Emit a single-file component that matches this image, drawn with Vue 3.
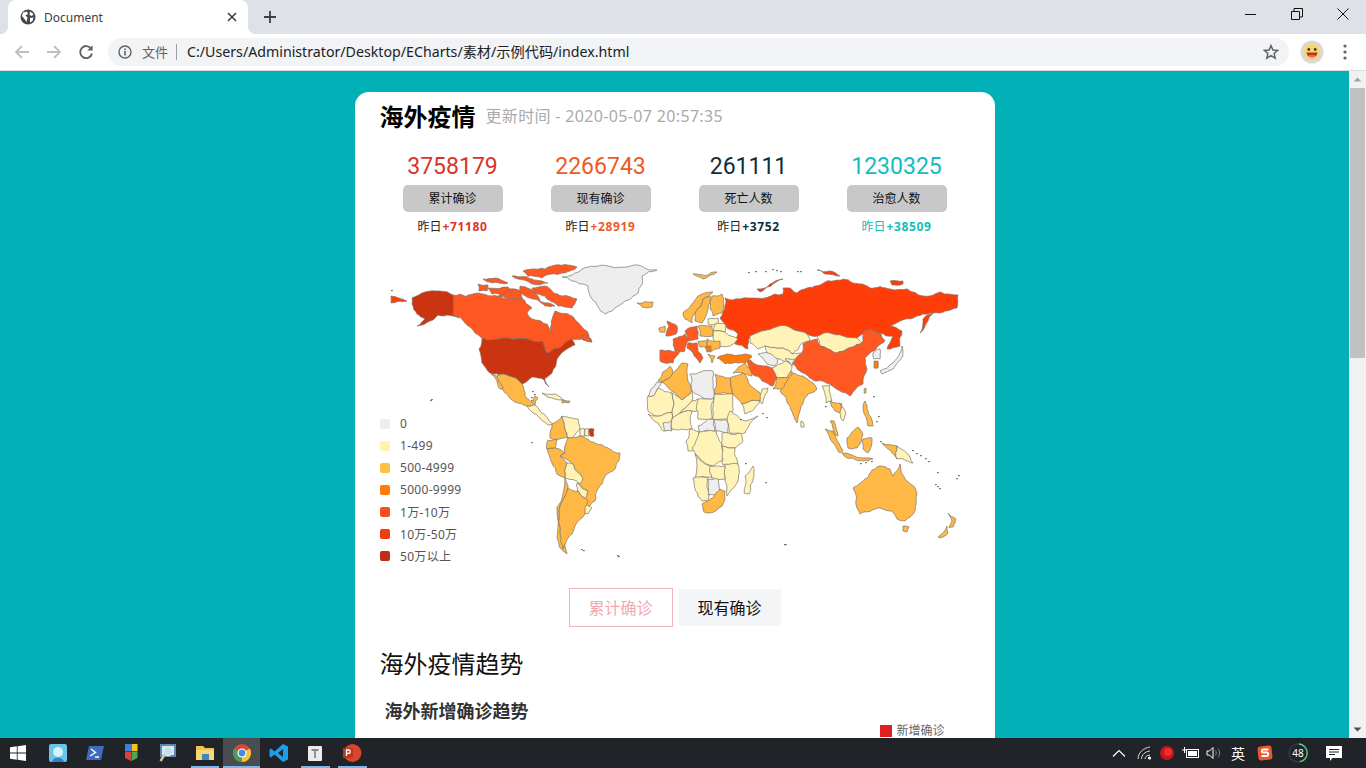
<script setup>
// 图例与配色
const colors = {
  none: '#eeeeee',
  low: '#fff3b8',
  mid: '#ffb845',
  high: '#ff7a0a',
  wan: '#ff5722',
  big: '#ff3d08',
  top: '#cb3410'
}

const legend = [
  { label: '0', color: '#eeeeee' },
  { label: '1-499', color: '#fff3b0' },
  { label: '500-4999', color: '#ffbf47' },
  { label: '5000-9999', color: '#ff7a0a' },
  { label: '1万-10万', color: '#f4511e' },
  { label: '10万-50万', color: '#f43c0a' },
  { label: '50万以上', color: '#bf2e12' }
]

const stats = [
  { value: 3758179, label: '累计确诊', add: 71180, color: '#d8352a' },
  { value: 2266743, label: '现有确诊', add: 28919, color: '#ee5a1f' },
  { value: 261111, label: '死亡人数', add: 3752, color: '#0c2f3a' },
  { value: 1230325, label: '治愈人数', add: 38509, color: '#14bdbd', tint: true }
]

// 国家轮廓，坐标与 viewBox 一致
const outlines = [
  ['none', '562,276 582,268 608,265 638,264 657,269 642,275 638,292 618,305 605,313 592,298 588,285 572,280'],
  ['mid', '637,302 653,301 652,306 642,306'],
  ['big', '391,295 407,300 391,302'],
  ['top', '412,297 425,291 440,290 453,294 453,313 459,317 447,314 438,314 430,320 417,325 425,318 417,313 412,303'],
  ['wan', '453,294 478,292 492,295 508,298 522,297 532,307 527,312 532,318 547,323 550,332 555,310 572,315 587,330 592,341 582,338 572,338 562,345 547,352 543,340 528,338 508,337 482,337 475,332 465,322 453,313'],
  ['wan', '532,287 545,285 562,295 577,298 572,307 558,305 545,295 535,292'],
  ['wan', '488,287 508,286 515,294 492,293'],
  ['wan', '478,283 488,284 487,290 479,290'],
  ['wan', '523,270 552,265 577,266 562,272 542,277 528,275'],
  ['wan', '483,278 495,277 508,282 492,282'],
  ['wan', '512,275 532,278 548,282 532,283 518,278'],
  ['wan', '498,295 510,288 520,290 522,297 508,298'],
  ['wan', '520,285 530,288 540,300 555,305 545,305 530,297 520,292'],
  ['wan', '582,335 587,332 592,341 583,339'],
  ['top', '482,337 508,337 528,338 543,340 547,352 562,345 572,338 575,344 567,348 557,358 552,372 545,377 549,386 543,378 532,376 522,383 515,377 503,373 490,372 482,362 479,348'],
  ['mid', '497,374 503,373 515,377 522,383 525,395 533,402 535,395 538,397 535,404 527,405 518,402 505,392 497,380'],
  ['mid', '491,373 495,374 503,388 500,388'],
  ['low', '527,405 535,404 540,410 548,418 553,423 548,424 540,417 532,411'],
  ['low', '542,392 555,393 568,401 555,398'],
  ['mid', '562,399 570,400 569,402 562,402'],
  ['mid', '562,415 552,423 550,437 557,439 568,437 565,428'],
  ['low', '562,415 578,418 580,428 572,437 568,437 565,428'],
  ['low', '580,428 585,428 585,435 580,435'],
  ['low', '585,428 589,428 589,435 585,435'],
  ['top', '589,428 594,428 594,435 590,435'],
  ['mid', '548,439 557,438 555,447 547,448'],
  ['mid', '547,448 555,447 565,452 560,455 567,462 565,477 557,473 552,462'],
  ['mid', '568,437 580,435 595,442 608,447 620,452 615,468 598,488 595,500 588,507 583,500 588,490 578,482 583,477 573,463 560,455 565,452'],
  ['low', '567,462 573,463 583,477 580,483 565,477'],
  ['low', '577,482 588,490 585,498 578,490'],
  ['low', '585,503 592,507 588,513 582,510'],
  ['mid', '565,477 568,487 560,533 567,553 560,547 557,537'],
  ['mid', '568,487 578,490 588,500 585,513 575,525 572,533 563,548 560,533'],
  ['big', '720,317 725,297 740,298 750,297 783,293 783,287 790,287 797,292 807,287 827,280 843,278 853,282 870,287 890,288 923,295 958,294 957,307 933,312 923,313 917,315 900,320 890,325 902,330 900,345 887,348 893,335 880,332 870,328 857,337 843,335 817,335 807,333 787,325 773,327 750,335 748,348 735,343 738,333 727,327'],
  ['big', '757,288 783,278 770,283 760,291'],
  ['big', '920,332 923,318 933,312 928,320'],
  ['big', '817,269 830,270 840,275 825,273'],
  ['big', '890,280 903,280 903,283 892,284'],
  ['mid', '693,273 717,271 703,278'],
  ['low', '750,335 773,327 787,325 807,333 810,340 802,342 792,353 783,347 765,345 758,348 750,342'],
  ['low', '817,335 830,332 843,335 857,337 862,342 847,348 837,352 820,345'],
  ['wan', '810,340 817,338 820,345 837,352 847,348 862,342 863,330 870,328 880,332 885,340 870,352 865,357 867,368 863,383 850,395 840,390 830,383 817,380 803,372 793,363 802,352 803,343'],
  ['low', '765,345 783,347 792,353 802,352 793,363 780,358 767,357'],
  ['none', '758,353 768,352 778,358 775,365 767,363'],
  ['none', '785,358 795,358 792,365'],
  ['low', '772,367 785,360 792,365 787,377 777,377'],
  ['wan', '747,358 755,363 767,365 772,367 777,377 773,385 762,380 752,373'],
  ['mid', '777,377 787,377 792,370 790,380 783,388 773,388'],
  ['mid', '793,372 803,375 813,382 817,388 808,393 800,410 797,422 790,405 785,395 780,390 787,380'],
  ['low', '801,420 803,421 804,426 801,426'],
  ['low', '822,385 830,384 832,400 826,402'],
  ['mid', '830,400 840,402 841,412 835,410'],
  ['low', '841,402 846,412 843,420 840,412'],
  ['mid', '830,420 834,420 838,435 834,433'],
  ['mid', '825,428 833,430 843,450 840,452 830,438'],
  ['mid', '842,452 873,458 863,460 847,457'],
  ['mid', '847,437 858,426 863,433 857,447 848,447'],
  ['mid', '863,438 872,437 868,452 863,448'],
  ['mid', '865,400 868,410 873,425 868,425 863,407'],
  ['mid', '882,442 897,445 897,458 888,448'],
  ['low', '897,445 913,462 903,458 897,458'],
  ['mid', '853,487 867,477 872,469 880,465 890,468 893,475 900,463 905,478 917,493 915,510 905,520 897,518 892,510 880,507 860,513 857,507'],
  ['mid', '903,525 909,526 907,531 903,530'],
  ['mid', '948,512 956,518 953,526 949,527 952,520'],
  ['mid', '938,536 947,525 948,532 940,537'],
  ['low', '745,475 753,465 754,475 749,493 744,492'],
  ['mid', '658,380 670,365 673,372 662,381'],
  ['mid', '662,381 673,372 682,362 688,363 692,390 682,399'],
  ['none', '648,395 657,381 662,381 658,387 653,395'],
  ['low', '648,395 653,395 658,387 672,392 672,412 655,415 648,410'],
  ['low', '672,392 682,399 692,390 692,400 680,412 672,418 672,412'],
  ['low', '648,413 655,415 672,412 672,418 672,428 663,430 658,422'],
  ['none', '663,422 672,420 672,430 665,430'],
  ['low', '672,418 680,412 692,410 692,428 682,428 672,428'],
  ['low', '692,400 698,398 698,410 692,410 680,412'],
  ['none', '690,373 713,370 714,397 705,398 692,390'],
  ['mid', '715,373 730,377 733,393 715,393'],
  ['low', '698,398 705,398 714,397 712,418 698,418'],
  ['low', '714,393 733,393 733,410 727,418 712,418'],
  ['low', '730,410 745,420 752,418 758,415 745,432 730,432 727,420'],
  ['none', '698,425 708,418 714,418 715,430 699,431'],
  ['none', '714,419 727,419 728,432 716,430'],
  ['low', '690,428 699,431 700,445 688,450 686,440'],
  ['low', '699,431 716,430 722,443 722,460 712,465 695,452 692,447'],
  ['low', '722,432 740,432 743,440 735,447 722,445'],
  ['low', '722,445 735,447 738,463 722,463'],
  ['low', '695,453 712,465 712,477 695,477'],
  ['low', '693,477 708,477 708,500 702,500'],
  ['none', '708,478 718,477 720,493 708,494'],
  ['low', '710,465 725,465 725,478 712,477'],
  ['low', '725,463 738,463 735,485 727,495 725,480'],
  ['mid', '702,503 720,488 725,490 722,505 710,512 704,511'],
  ['mid', '730,377 743,372 762,395 760,400 742,403 733,393'],
  ['mid', '733,372 745,362 752,375 743,372'],
  ['high', '717,357 727,353 745,353 752,355 745,362 725,363'],
  ['low', '762,388 768,387 762,403 760,400'],
  ['low', '742,403 760,400 752,410 745,413'],
  ['mid', '683,312 698,295 713,291 703,298 695,312 692,322 685,318'],
  ['mid', '695,312 703,298 710,295 708,308 702,322 695,320'],
  ['mid', '712,295 722,293 722,312 713,315 710,307'],
  ['low', '708,318 718,317 718,323 708,323'],
  ['low', '715,323 725,323 725,331 713,330'],
  ['mid', '698,325 712,325 713,335 700,335'],
  ['wan', '685,330 697,325 698,338 688,340'],
  ['low', '713,330 725,331 738,338 730,345 715,343'],
  ['wan', '673,338 685,333 688,340 685,350 675,350'],
  ['wan', '667,320 677,325 676,333 666,335 669,325'],
  ['mid', '659,327 665,325 665,331 660,331'],
  ['wan', '660,349 680,350 673,362 665,362 660,360'],
  ['wan', '688,342 697,342 698,350 703,357 700,362 693,352 687,347'],
  ['mid', '698,340 707,340 707,347 700,346'],
  ['mid', '707,338 720,340 720,347 712,350 707,347'],
  ['high', '706,345 711,345 711,351 707,351'],
  ['mid', '708,353 715,355 712,362'],
  ['none', '880,370 893,362 900,352 902,345 903,355 893,368 882,373'],
  ['none', '873,352 880,348 880,358 874,358'],
  ['high', '874,360 878,360 878,367 874,367'],
  ['mid', '864,388 866,387 866,392 864,392']
]

// 把长边细分并轻微抖动，相邻国家共用的边保持一致
function roughen(a, b, depth) {
  const len = Math.hypot(b[0] - a[0], b[1] - a[1])
  if (depth === 0 || len < 4) return []
  const [p, q] = a[0] < b[0] || (a[0] === b[0] && a[1] < b[1]) ? [a, b] : [b, a]
  const seed = Math.sin(p[0] * 12.9898 + p[1] * 78.233 + q[0] * 37.719 + q[1] * 11.135) * 43758.5453
  const offset = (seed - Math.floor(seed) - 0.5) * len * 0.22
  const mid = [
    (a[0] + b[0]) / 2 + ((q[1] - p[1]) / len) * offset,
    (a[1] + b[1]) / 2 - ((q[0] - p[0]) / len) * offset
  ]
  return [...roughen(a, mid, depth - 1), mid, ...roughen(mid, b, depth - 1)]
}

const countries = outlines.map(([key, points]) => {
  const pts = points.split(' ').map(s => s.split(',').map(Number))
  const out = []
  pts.forEach((pt, i) => {
    out.push(pt, ...roughen(pt, pts[(i + 1) % pts.length], 3))
  })
  return { fill: colors[key], points: out.map(p => p[0].toFixed(1) + ',' + p[1].toFixed(1)).join(' ') }
})

// 零散小岛
const islands = [
  [391, 289], [430, 399], [431, 398], [531, 399], [531, 396], [532, 390], [534, 393],
  [531, 441], [581, 548], [583, 549], [617, 554], [618, 555], [784, 543], [785, 543],
  [765, 481], [958, 474], [956, 477], [935, 483], [937, 485], [939, 487], [937, 471],
  [916, 452], [920, 454], [925, 457], [928, 460], [912, 449], [878, 415], [876, 420],
  [880, 440], [860, 462], [865, 461], [871, 460], [748, 271], [755, 270], [765, 270],
  [772, 268], [776, 269], [780, 270], [797, 270], [800, 270], [873, 395], [825, 405],
  [762, 412], [766, 416], [745, 462], [740, 418]
]

const taskIcons = ['cloud', 'shell', 'tiles', 'search', 'folder', 'chrome', 'code', 'text', 'slides']
const openApps = ['folder', 'chrome', 'text', 'slides']
</script>

<template>
  <div class="desktop">
    <!-- 标签栏 -->
    <header class="tabbar">
      <div class="tab">
        <svg class="globe" width="16" height="16" viewBox="0 0 16 16">
          <circle cx="8" cy="8" r="7.5" fill="#45494d" />
          <path d="M3 3.5 7 2.5 8 5 5.5 6.5 7.5 8.5 6.5 13 4.5 10 2 7ZM10 2.5 13.5 5 12 7 9.5 6ZM10 9 13.5 8.5 12.5 12 10 13.5Z" fill="#fff" />
        </svg>
        <span class="tab-title">Document</span>
        <svg class="tab-close" width="10" height="10" viewBox="0 0 10 10">
          <path d="M1 1 9 9M9 1 1 9" stroke="#3c4043" stroke-width="1.6" />
        </svg>
      </div>
      <svg class="new-tab" width="12" height="12" viewBox="0 0 12 12">
        <path d="M6 0V12M0 6H12" stroke="#3c4043" stroke-width="1.8" />
      </svg>
      <div class="win-btns">
        <svg width="12" height="12" viewBox="0 0 12 12"><path d="M0 6.5H11" stroke="#111" /></svg>
        <svg width="12" height="12" viewBox="0 0 12 12">
          <path d="M.5 3.5H8.5V11.5H.5ZM3 3.5V.5H11.5V9H8.5" fill="none" stroke="#111" />
        </svg>
        <svg width="12" height="12" viewBox="0 0 12 12"><path d="M.5.5 11.5 11.5M11.5.5.5 11.5" stroke="#111" /></svg>
      </div>
    </header>

    <!-- 地址栏 -->
    <nav class="toolbar">
      <svg class="nav-ico" width="16" height="16" viewBox="0 0 16 16">
        <path d="M15 8H2M8 2 2 8 8 14" fill="none" stroke="#bcbfc3" stroke-width="1.8" />
      </svg>
      <svg class="nav-ico" width="16" height="16" viewBox="0 0 16 16">
        <path d="M1 8H14M8 2 14 8 8 14" fill="none" stroke="#bcbfc3" stroke-width="1.8" />
      </svg>
      <svg class="nav-ico" width="16" height="16" viewBox="0 0 16 16">
        <path d="M13.2 4.8A6 6 0 1 0 14 9.5" fill="none" stroke="#5f6368" stroke-width="1.9" />
        <path d="M14.6 1.2V6.6H9.2Z" fill="#5f6368" />
      </svg>
      <div class="omnibox">
        <svg width="14" height="14" viewBox="0 0 14 14">
          <circle cx="7" cy="7" r="6" fill="none" stroke="#5f6368" stroke-width="1.4" />
          <path d="M7 6V10.5M7 3.4V5" stroke="#5f6368" stroke-width="1.6" />
        </svg>
        <span class="scheme">文件</span>
        <span class="url">C:/Users/Administrator/Desktop/ECharts/素材/示例代码/index.html</span>
        <svg class="star" width="16" height="16" viewBox="0 0 16 16">
          <path d="M8 1.6 9.9 6 14.7 6.4 11.1 9.5 12.2 14.2 8 11.7 3.8 14.2 4.9 9.5 1.3 6.4 6.1 6Z" fill="none" stroke="#5f6368" stroke-width="1.5" />
        </svg>
      </div>
      <svg class="avatar" width="24" height="24" viewBox="0 0 24 24">
        <circle cx="12" cy="12" r="11.5" fill="#ddd9d2" />
        <circle cx="12" cy="12" r="8" fill="#f8d66b" />
        <circle cx="8.8" cy="9.5" r="1.4" fill="#4a3a20" />
        <circle cx="15.2" cy="9.5" r="1.4" fill="#4a3a20" />
        <path d="M6.5 12.5H17.5C17 16 15 17 12 17S7 16 6.5 12.5Z" fill="#b8302a" />
        <path d="M9 15H15C15 18.5 9 18.5 9 15Z" fill="#f06a5a" />
      </svg>
      <svg class="menu-dots" width="4" height="16" viewBox="0 0 4 16">
        <circle cx="2" cy="2" r="1.6" fill="#5f6368" />
        <circle cx="2" cy="8" r="1.6" fill="#5f6368" />
        <circle cx="2" cy="14" r="1.6" fill="#5f6368" />
      </svg>
    </nav>

    <!-- 页面内容 -->
    <div class="viewport">
      <main class="page">
        <section class="card">
          <div class="head">
            <h1>海外疫情</h1>
            <span class="update">更新时间 - 2020-05-07 20:57:35</span>
          </div>

          <ul class="stats">
            <li v-for="item in stats" :key="item.label" class="stat">
              <div class="stat-num" :style="{ color: item.color }">{{ item.value }}</div>
              <div class="stat-label">{{ item.label }}</div>
              <div class="stat-add" :style="{ color: item.tint ? item.color : '#222' }">
                昨日<b :style="{ color: item.color }">+{{ item.add }}</b>
              </div>
            </li>
          </ul>

          <div class="map">
            <svg class="map-svg" width="600" height="310" viewBox="375 255 600 310">
              <polygon
                v-for="(c, i) in countries"
                :key="i"
                :points="c.points"
                :fill="c.fill"
                stroke="#7d7468"
                stroke-width="0.7"
                stroke-linejoin="round"
              />
              <rect
                v-for="(p, i) in islands"
                :key="'i' + i"
                :x="p[0]"
                :y="p[1]"
                width="1.8"
                height="1.2"
                fill="#77716a"
              />
            </svg>
            <ul class="legend">
              <li v-for="item in legend" :key="item.label">
                <i :style="{ background: item.color }"></i>{{ item.label }}
              </li>
            </ul>
          </div>

          <div class="switch">
            <button class="switch-btn active">累计确诊</button>
            <button class="switch-btn">现有确诊</button>
          </div>

          <h2 class="trend-title">海外疫情趋势</h2>
          <div class="chart-head">
            <h3>海外新增确诊趋势</h3>
            <div class="chart-legend"><i></i>新增确诊</div>
          </div>
          <div class="chart-body"></div>
        </section>
      </main>
      <aside class="scrollbar">
        <svg width="17" height="17" viewBox="0 0 17 17"><path d="M4.5 10.5 8.5 6.5 12.5 10.5Z" fill="#a3a3a3" /></svg>
        <div class="thumb"></div>
        <svg class="arrow-down" width="17" height="17" viewBox="0 0 17 17"><path d="M4.5 6.5 8.5 10.5 12.5 6.5Z" fill="#505050" /></svg>
      </aside>
    </div>

    <!-- 任务栏 -->
    <footer class="taskbar">
      <svg class="start" width="16" height="16" viewBox="0 0 16 16">
        <path d="M0 2.3 6.8 1.3V7.6H0ZM7.6 1.2 16 0V7.6H7.6ZM0 8.4H6.8V14.7L0 13.7ZM7.6 8.4H16V16L7.6 14.8Z" fill="#fff" />
      </svg>
      <div v-for="name in taskIcons" :key="name" class="task" :class="{ on: name === 'chrome', open: openApps.includes(name) }">
        <svg width="20" height="20" viewBox="0 0 20 20">
          <template v-if="name === 'cloud'">
            <rect x="1" y="1" width="18" height="18" rx="2" fill="#6cc4ea" />
            <circle cx="10" cy="9" r="5" fill="#d8f1fb" />
            <path d="M4 19C5 13 15 13 16 19Z" fill="#2b86c5" />
          </template>
          <template v-else-if="name === 'shell'">
            <path d="M4 3H19L16 17H1Z" fill="#3f6cc0" />
            <path d="M6 6 10.5 9.5 5 13M10 14H14" fill="none" stroke="#fff" stroke-width="1.4" />
          </template>
          <template v-else-if="name === 'tiles'">
            <rect x="4" y="1" width="6" height="7" fill="#3d7fdc" />
            <rect x="10.5" y="1" width="6" height="7" fill="#f6c21c" />
            <path d="M4 8.5H10V18L4 15Z" fill="#d8433c" />
            <path d="M10.5 8.5H16.5V15L10.5 18Z" fill="#4aa84f" />
          </template>
          <template v-else-if="name === 'search'">
            <rect x="2" y="1" width="16" height="13" fill="#5d87b5" />
            <rect x="4" y="3" width="12" height="9" fill="#dbe7f1" />
            <circle cx="10" cy="8" r="4.5" fill="#bfe0ee" stroke="#e9e9e9" stroke-width="1.4" />
            <path d="M7 11 2.5 18" stroke="#d8c8a8" stroke-width="2.4" />
          </template>
          <template v-else-if="name === 'folder'">
            <path d="M1 3H8L10 5H19V17H1Z" fill="#f2c14b" />
            <rect x="1" y="7" width="18" height="10" fill="#f9d774" />
            <rect x="7" y="11" width="7" height="6" fill="#3d8ac2" />
          </template>
          <template v-else-if="name === 'chrome'">
            <circle cx="10" cy="10" r="9" fill="#d8483a" />
            <path d="M10 10 17.8 5.5A9 9 0 0 1 10 19Z" fill="#f5c534" />
            <path d="M10 10 10 19A9 9 0 0 1 2.2 5.5Z" fill="#4a9d57" />
            <circle cx="10" cy="10" r="4.6" fill="#fff" />
            <circle cx="10" cy="10" r="3.4" fill="#4a8be0" />
          </template>
          <template v-else-if="name === 'code'">
            <path d="M14 1 19 3.5V16.5L14 19 5.5 11.5 2 14.5 .5 13.5V6.5L2 5.5 5.5 8.5ZM14 6 9 10 14 14Z" fill="#1f9ee8" />
          </template>
          <template v-else-if="name === 'text'">
            <rect x="3" y="3" width="14" height="15" rx="1" fill="#ececec" />
            <path d="M6.5 7H13.5M10 7V15" stroke="#8a8a8a" stroke-width="1.8" />
          </template>
          <template v-else>
            <circle cx="10.5" cy="10" r="9" fill="#d8472b" />
            <rect x="1" y="5" width="10" height="10" rx="1" fill="#b83a1e" />
            <path d="M4.5 13V7H7C8.6 7 8.6 10.4 7 10.4H4.5" fill="none" stroke="#fff" stroke-width="1.3" />
          </template>
        </svg>
      </div>

      <div class="tray">
        <svg width="14" height="8" viewBox="0 0 14 8"><path d="M1 7.5 7 1.5 13 7.5" fill="none" stroke="#fff" stroke-width="1.2" /></svg>
        <svg class="t-wifi" width="16" height="14" viewBox="0 0 16 14">
          <path d="M1 13C1 7 6 2 13 1M4.5 13C4.5 9 8 5.5 13 5M8 13C8 11 10 9 13 9" fill="none" stroke="#d8d8d8" />
          <circle cx="12.5" cy="12" r="1.6" fill="#fff" />
        </svg>
        <svg class="t-rec" width="14" height="14" viewBox="0 0 14 14">
          <circle cx="7" cy="7" r="7" fill="#c4161c" />
          <circle cx="8" cy="6" r="4" fill="#ef2b2b" />
        </svg>
        <svg class="t-bat" width="17" height="12" viewBox="0 0 17 12">
          <rect x="4.5" y="2.5" width="12" height="8" fill="none" stroke="#fff" />
          <rect x="6" y="4" width="9" height="5" fill="#fff" />
          <path d="M0 3H5M2.5 0V6" stroke="#fff" />
        </svg>
        <svg class="t-vol" width="16" height="14" viewBox="0 0 16 14">
          <path d="M1 5H3.5L7 1.5V12.5L3.5 9H1Z" fill="none" stroke="#fff" />
          <path d="M9.5 4.5C10.5 6 10.5 8 9.5 9.5M12 2.5C14 5 14 9 12 11.5" fill="none" stroke="#8c8c8c" />
        </svg>
        <span class="t-lang">英</span>
        <svg class="t-sogou" width="16" height="16" viewBox="0 0 16 16">
          <rect x="1" y="1" width="14" height="14" rx="2.5" fill="#e8592a" transform="rotate(-6 8 8)" />
          <path d="M11.5 4.5H6C4.5 4.5 4.5 7.5 6 7.5H10C11.5 7.5 11.5 11 10 11H4.5" fill="none" stroke="#fff" stroke-width="2" />
        </svg>
        <div class="t-badge">
          <svg width="20" height="20" viewBox="0 0 20 20">
            <circle cx="10" cy="10" r="9" fill="none" stroke="#3a3d40" stroke-width="1.4" />
            <path d="M11 1A9 9 0 0 1 12 18.8" fill="none" stroke="#55c78a" stroke-width="1.4" />
          </svg>
          <span>48</span>
        </div>
        <svg class="t-note" width="16" height="16" viewBox="0 0 16 16">
          <path d="M0 1H16V13H6.5L4 16V13H0Z" fill="#fff" />
          <path d="M3 4.5H13M3 7H13M3 9.5H9" stroke="#202428" />
        </svg>
      </div>
    </footer>
  </div>
</template>

<style>
html,
body {
  margin: 0;
  overflow: hidden;
}
</style>

<style scoped>
.desktop {
  width: 1366px;
  height: 768px;
  display: flex;
  flex-direction: column;
  overflow: hidden;
  font-family: "Noto Sans", "Noto Sans CJK SC", sans-serif;
}

.tabbar {
  height: 34px;
  flex: none;
  display: flex;
  align-items: center;
  background: #dee1e6;
}

.tab {
  position: relative;
  width: 240px;
  height: 34px;
  margin-left: 8px;
  box-sizing: border-box;
  padding: 0 12px;
  display: flex;
  align-items: center;
  background: #fff;
  border-radius: 8px 8px 0 0;
}

.tab::before,
.tab::after {
  content: "";
  position: absolute;
  bottom: 0;
  width: 8px;
  height: 8px;
}

.tab::before {
  left: -8px;
  background: radial-gradient(circle at 0 0, transparent 8px, #fff 8.5px);
}

.tab::after {
  right: -8px;
  background: radial-gradient(circle at 100% 0, transparent 8px, #fff 8.5px);
}

.tab-title {
  margin-left: 8px;
  font-size: 12px;
  color: #3c4043;
}

.tab-close {
  margin-left: auto;
  margin-right: -1px;
}

.new-tab {
  margin-left: 16px;
}

.win-btns {
  margin-left: auto;
  margin-right: 17px;
  margin-top: -6px;
  display: flex;
  gap: 34px;
}

.toolbar {
  height: 37px;
  flex: none;
  box-sizing: border-box;
  border-bottom: 1px solid #d8dade;
  padding-left: 14px;
  display: flex;
  align-items: center;
  background: #fff;
}

.nav-ico {
  margin-right: 16px;
}

.omnibox {
  width: 1181px;
  height: 28px;
  margin-left: -2px;
  box-sizing: border-box;
  padding: 0 10px;
  display: flex;
  align-items: center;
  background: #f1f3f4;
  border-radius: 14px;
}

.scheme {
  margin-left: 10px;
  padding-right: 8px;
  border-right: 1px solid #9aa0a6;
  font-size: 13px;
  line-height: 16px;
  color: #5f6368;
}

.url {
  margin-left: 10px;
  margin-top: -2px;
  font-size: 14.2px;
  color: #202124;
}

.star {
  margin-left: auto;
}

.avatar {
  margin-left: 11px;
}

.menu-dots {
  margin-left: 19px;
}

.viewport {
  flex: 1;
  min-height: 0;
  display: flex;
}

.page {
  flex: 1;
  overflow: hidden;
  background: #00b0b6;
}

.card {
  width: 640px;
  margin: 21px auto 0;
  box-sizing: border-box;
  padding: 0 25px;
  background: #fff;
  border-radius: 14px;
}

.head {
  height: 46px;
  display: flex;
  align-items: center;
}

.head h1 {
  margin: 0;
  font-size: 24px;
  font-weight: 700;
  color: #000;
}

.update {
  margin-left: 10px;
  font-size: 16px;
  letter-spacing: 0.34px;
  color: #aaa;
}

.stats {
  margin: 13px 0 0 -1px;
  padding: 0;
  list-style: none;
  display: grid;
  grid-template-columns: repeat(4, 148px);
}

.stat {
  display: flex;
  flex-direction: column;
  align-items: center;
}

.stat-num {
  height: 34px;
  line-height: 32px;
  font-family: Roboto, sans-serif;
  font-size: 23px;
}

.stat-label {
  width: 100px;
  height: 27px;
  line-height: 27px;
  text-align: center;
  font-size: 12px;
  color: #111;
  background: #c8c8c8;
  border-radius: 5px;
}

.stat-add {
  margin-top: 6px;
  line-height: 18px;
  font-size: 12px;
}

.stat-add b {
  margin-left: 1px;
  font-weight: 700;
  letter-spacing: 0.6px;
}

.map {
  position: relative;
  height: 327px;
  margin: 0 -25px;
}

.map-svg {
  display: block;
  margin: 20px 0 0 20px;
}

.legend {
  position: absolute;
  left: 25px;
  top: 156.5px;
  margin: 0;
  padding: 0;
  list-style: none;
  font-size: 12px;
  letter-spacing: 0.3px;
  color: #555;
}

.legend li {
  height: 22px;
  display: flex;
  align-items: center;
}

.legend i {
  width: 10px;
  height: 10px;
  margin-right: 10.5px;
  border-radius: 2px;
}

.switch {
  display: flex;
  justify-content: center;
  align-items: center;
  gap: 6px;
  margin-top: 5px;
}

.switch-btn {
  width: 102px;
  height: 37px;
  padding: 0 0 2px;
  border: 0;
  font-family: inherit;
  font-size: 16px;
  color: #111;
  background: #f4f5f7;
}

.switch-btn.active {
  width: 104px;
  height: 39px;
  border: 1px solid #f0b5bb;
  color: #f3a8af;
  background: #fff;
}

.trend-title {
  margin: 19px 0 0;
  line-height: 36px;
  font-size: 24px;
  font-weight: 400;
  color: #111;
}

.chart-head {
  position: relative;
  height: 60px;
  margin-top: 14px;
}

.chart-head h3 {
  margin: 0 0 0 5px;
  line-height: 30px;
  font-size: 18px;
  font-weight: 700;
  color: #333;
}

.chart-legend {
  position: absolute;
  left: 500px;
  top: 28px;
  display: flex;
  align-items: center;
  font-size: 12px;
  line-height: 14px;
  color: #666;
}

.chart-legend i {
  width: 12px;
  height: 12px;
  margin-right: 5px;
  background: #e02020;
}

.chart-body {
  height: 300px;
}

.scrollbar {
  width: 17px;
  flex: none;
  position: relative;
  background: #f1f1f1;
}

.scrollbar svg {
  display: block;
}

.thumb {
  width: 15px;
  height: 270px;
  margin-left: 1px;
  background: #c1c1c1;
}

.arrow-down {
  position: absolute;
  bottom: 0;
}

.taskbar {
  height: 30px;
  flex: none;
  padding-left: 10px;
  display: flex;
  align-items: center;
  background: #202327;
}

.start {
  margin-right: 13.5px;
}

.task {
  position: relative;
  width: 36.8px;
  height: 30px;
  box-sizing: border-box;
  display: flex;
  align-items: center;
  justify-content: center;
}

.task.open::after {
  content: "";
  position: absolute;
  bottom: 0;
  left: 4px;
  right: 4px;
  height: 2px;
  background: #76b9ed;
}

.task.on {
  background: #4a4d50;
}

.task.on::after {
  left: 0;
  right: 0;
}

.tray {
  margin-left: auto;
  height: 30px;
  display: flex;
  align-items: center;
  color: #fff;
  padding-right: 24px;
}

.t-wifi {
  margin-left: 11px;
}

.t-rec {
  margin-left: 7px;
}

.t-bat {
  margin-left: 8px;
}

.t-vol {
  margin-left: 7px;
}

.t-lang {
  margin-left: 9px;
  font-size: 14px;
}

.t-sogou {
  margin-left: 12px;
}

.t-badge {
  position: relative;
  width: 20px;
  height: 20px;
  margin-left: 15px;
}

.t-badge svg {
  display: block;
}

.t-badge span {
  position: absolute;
  inset: 0;
  text-align: center;
  line-height: 20px;
  font-size: 10px;
}

.t-note {
  margin-left: 18px;
}
</style>
